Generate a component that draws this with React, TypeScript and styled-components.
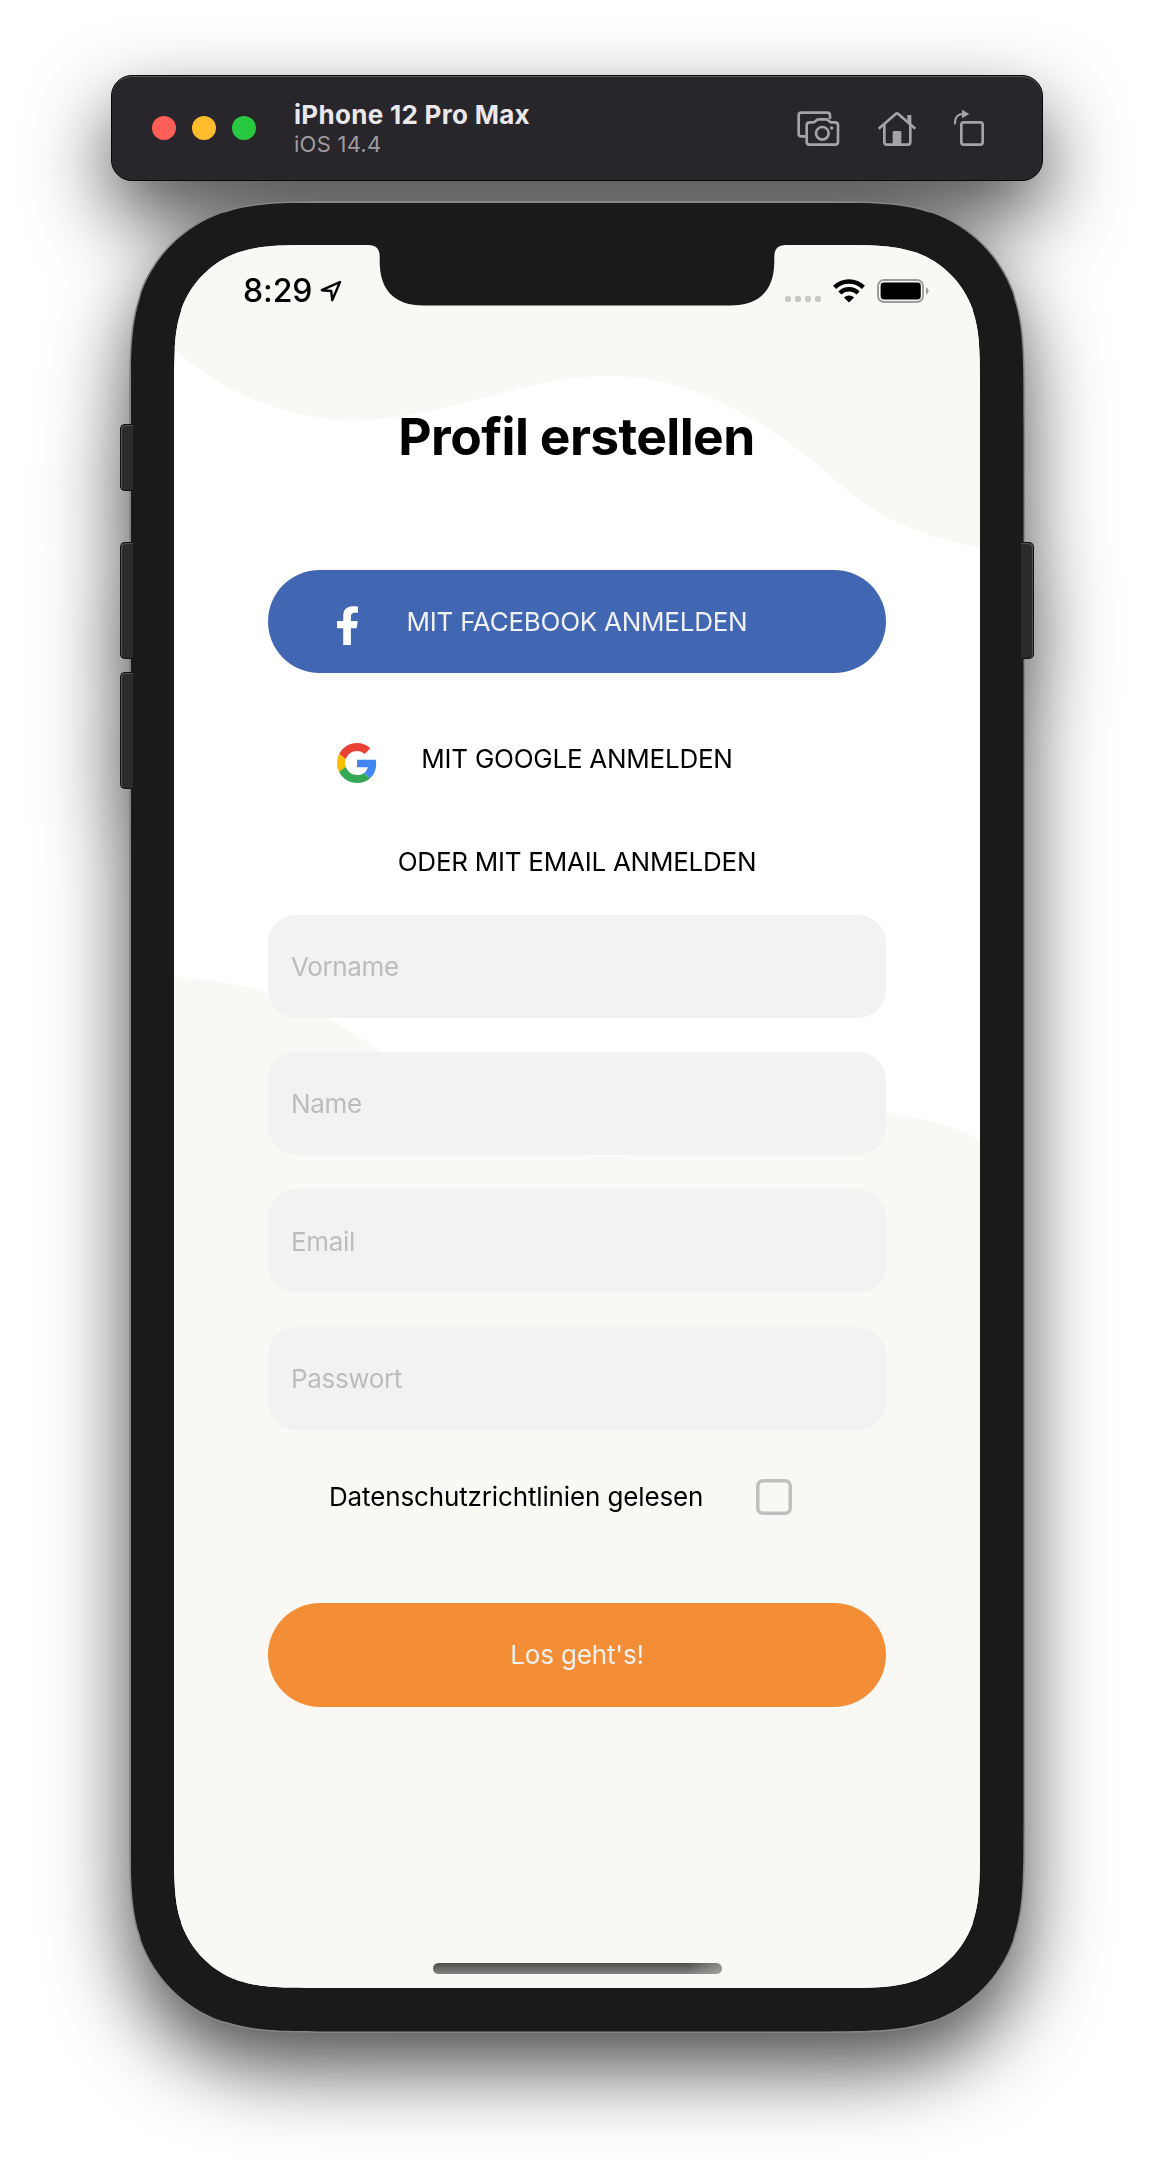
import React from "react";
import styled, { createGlobalStyle } from "styled-components";

const font = `Inter, "Liberation Sans", sans-serif`;

/* Outline of a rectangle with continuous (squircle-like) corners. */
const smoothRect = (w: number, h: number, r: number) => {
  const n = (v: number) => v.toFixed(2);
  const p = (x: number, y: number) => `${n(x)} ${n(y)}`;
  const a = 1.528665 * r;
  const b = 1.088493 * r;
  const c = 0.868407 * r;
  const d = 0.631494 * r;
  const e = 0.074911 * r;
  const f = 0.372824 * r;
  const g = 0.16906 * r;
  const i = 0.669934 * r;
  const j = 0.065496 * r;
  return [
    `M${p(a, 0)} L${p(w - a, 0)}`,
    `C${p(w - b, 0)} ${p(w - c, 0)} ${p(w - i, j)} L${p(w - d, e)}`,
    `C${p(w - f, g)} ${p(w - g, f)} ${p(w - e, d)} L${p(w - j, i)}`,
    `C${p(w, c)} ${p(w, b)} ${p(w, a)}`,
    `L${p(w, h - a)}`,
    `C${p(w, h - b)} ${p(w, h - c)} ${p(w - j, h - i)} L${p(w - e, h - d)}`,
    `C${p(w - g, h - f)} ${p(w - f, h - g)} ${p(w - d, h - e)} L${p(w - i, h - j)}`,
    `C${p(w - c, h)} ${p(w - b, h)} ${p(w - a, h)}`,
    `L${p(a, h)}`,
    `C${p(b, h)} ${p(c, h)} ${p(i, h - j)} L${p(d, h - e)}`,
    `C${p(f, h - g)} ${p(g, h - f)} ${p(e, h - d)} L${p(j, h - i)}`,
    `C${p(0, h - c)} ${p(0, h - b)} ${p(0, h - a)}`,
    `L${p(0, a)}`,
    `C${p(0, b)} ${p(0, c)} ${p(j, i)} L${p(e, d)}`,
    `C${p(g, f)} ${p(f, g)} ${p(d, e)} L${p(i, j)}`,
    `C${p(c, 0)} ${p(b, 0)} ${p(a, 0)} Z`,
  ].join(" ");
};

const GlobalStyle = createGlobalStyle`
  *, *::before, *::after { box-sizing: border-box; }
  body { margin: 0; background: #fff; font-family: ${font}; }
`;

const Page = styled.main`
  height: 2182px;
  padding-top: 75px;
  overflow: hidden;
  background: #fff;
`;

const Simulator = styled.div`
  display: flex;
  flex-direction: column;
  align-items: center;
  gap: 20px;
  filter: drop-shadow(0 35px 40px rgba(0, 0, 0, 0.7));
`;

const Toolbar = styled.header`
  display: flex;
  align-items: center;
  width: 932px;
  height: 106px;
  padding: 0 57px 0 40px;
  border: 1px solid #060606;
  border-radius: 21px;
  background: #28262b;
  box-shadow: inset 0 1px 0 #5c5b5e;
`;

const Lights = styled.div`
  display: flex;
  gap: 16px;
`;

const Light = styled.span<{ $color: string }>`
  width: 24px;
  height: 24px;
  border-radius: 50%;
  background: ${(p) => p.$color};
`;

const DeviceInfo = styled.div`
  flex: 1;
  margin-left: 38px;
  padding-top: 2px;
`;

const DeviceName = styled.div`
  font-size: 26px;
  font-weight: 700;
  line-height: 30px;
  letter-spacing: 0.3px;
  color: #e9e8ea;
`;

const DeviceOs = styled.div`
  font-size: 22px;
  line-height: 29px;
  letter-spacing: 0.25px;
  color: #9d9ba0;
`;

const Actions = styled.div`
  display: flex;
  align-items: center;
  gap: 36px;
  color: #a5a3a8;
`;

const Device = styled.div`
  position: relative;
  width: 896px;
  height: 1832px;
`;

const SideKey = styled.span<{ $side: "left" | "right"; $top: number; $height: number }>`
  position: absolute;
  ${(p) => p.$side}: -9px;
  top: ${(p) => p.$top}px;
  width: 13px;
  height: ${(p) => p.$height}px;
  border: 1px solid #111;
  border-${(p) => (p.$side === "left" ? "right" : "left")}: 0;
  border-radius: ${(p) => (p.$side === "left" ? "5px 0 0 5px" : "0 5px 5px 0")};
  background: #2b2b2b;
  box-shadow: inset ${(p) => (p.$side === "left" ? "1px" : "-1px")} 1px 1px #555;
`;

const Rim = styled.div`
  position: relative;
  padding: 1.5px;
  width: 896px;
  height: 1832px;
  background: #868686;
  clip-path: path("${smoothRect(896, 1832, 145)}");
`;

const Bezel = styled.div`
  width: 893px;
  height: 1829px;
  padding: 42.5px 43.5px;
  background: #1a1a1a;
  clip-path: path("${smoothRect(893, 1829, 143.5)}");
`;

const Screen = styled.section`
  position: relative;
  display: flex;
  flex-direction: column;
  width: 806px;
  height: 1743px;
  padding-bottom: 14.5px;
  background: #fff;
  clip-path: path("${smoothRect(806, 1743, 101)}");
`;

const Waves = styled.svg`
  position: absolute;
  inset: 0;
`;

const Notch = styled.svg`
  position: absolute;
  top: 0;
  left: 190px;
`;

const StatusBar = styled.div`
  position: relative;
  display: flex;
  align-items: center;
  justify-content: space-between;
  height: 91px;
  padding: 0 50px 0 69px;
`;

const StatusGroup = styled.div<{ $gap: number }>`
  display: flex;
  align-items: center;
  gap: ${(p) => p.$gap}px;
`;

const Clock = styled.span`
  font-size: 32px;
  font-weight: 550;
  line-height: 40px;
  letter-spacing: -0.1px;
  color: #000;
`;

const Dots = styled.span`
  display: flex;
  gap: 4px;
  padding-top: 16px;
`;

const Dot = styled.i`
  width: 6px;
  height: 6px;
  border-radius: 2px;
  background: #c8c7c5;
`;

const Form = styled.form`
  position: relative;
  display: flex;
  flex-direction: column;
  width: 618px;
  margin: 0 auto;
`;

const Title = styled.h1`
  margin: 69px 0 103px;
  padding-right: 1px;
  font-size: 51.5px;
  font-weight: 700;
  line-height: 62px;
  letter-spacing: -0.6px;
  text-align: center;
  white-space: nowrap;
  color: #000;
`;

const ProviderButton = styled.button<{ $bg: string; $color: string }>`
  display: grid;
  grid-template-columns: 1fr auto 1fr;
  align-items: center;
  height: 103.4px;
  margin: 0 0 33.6px;
  padding: 0;
  border: 0;
  border-radius: 52px;
  background: ${(p) => p.$bg};
  color: ${(p) => p.$color};
  font: 400 26px ${font};

  &:nth-of-type(2) {
    margin-bottom: 0;
  }
`;

const ProviderIcon = styled.span`
  display: flex;
  padding: 8px 0 0 68.5px;
`;

const Caption = styled.span<{ $spacing: number }>`
  letter-spacing: ${(p) => p.$spacing}px;
  white-space: nowrap;
`;

const Divider = styled.p`
  margin: 0;
  font-size: 26px;
  line-height: 104.2px;
  text-align: center;
  color: #000;
`;

const Fields = styled.div`
  display: flex;
  flex-direction: column;
  gap: 34px;
`;

const Field = styled.input`
  width: 100%;
  height: 103.4px;
  padding: 0 23px;
  border: 0;
  border-radius: 28px;
  outline: 0;
  background: #f2f2f2;
  font: 400 26px ${font};
  letter-spacing: -0.35px;

  &::placeholder {
    color: #bcbcbc;
    opacity: 1;
  }
`;

const Consent = styled.label`
  display: flex;
  align-items: center;
  justify-content: space-between;
  height: 36px;
  margin: 48.5px 94px 88.5px 61px;
  font-size: 26px;
  color: #000;
`;

const Checkbox = styled.span`
  width: 36px;
  height: 36px;
  border-radius: 7px;
  box-shadow: inset 0 0 0 3.5px #bfbfbf;
`;

const Submit = styled.button`
  height: 103.5px;
  padding: 0;
  border: 0;
  border-radius: 52px;
  background: #f48e36;
  color: #f1f1f1;
  font: 400 26px ${font};
`;

const HomeIndicator = styled.div`
  position: relative;
  width: 289px;
  height: 10.5px;
  margin: auto auto 0;
  border-radius: 5.5px;
  background: linear-gradient(90deg, transparent 88%, rgba(190, 188, 185, 0.55)),
    linear-gradient(#4e4d4b, #858382);
`;

const ScreenshotIcon = () => (
  <svg width="45" height="38" viewBox="80 54 135 114" fill="none" stroke="currentColor" strokeWidth="8">
    <path d="M109 136H96Q88 136 88 128V73Q88 65 96 65H174Q182 65 182 73V84" />
    <path d="M122 94H131Q136 94 139 90L141 88Q144 85 149 85H169Q174 85 177 88L179 90Q182 94 187 94H197Q206 94 206 103V152Q206 161 197 161H121Q112 161 112 152V103Q112 94 122 94Z" />
    <circle cx="159" cy="127" r="19" />
    <circle cx="187" cy="111" r="5" fill="currentColor" stroke="none" />
  </svg>
);

const HomeIcon = () => (
  <svg width="40" height="38" viewBox="321 54 120 114" fill="none" stroke="currentColor" strokeWidth="8">
    <path d="M326 113L377 69Q381 65 385 69L436 113" />
    <path d="M343 100V152Q343 161 351 161H413Q421 161 421 152V100" />
    <path d="M412 92V72H424V102ZM368 160V124Q368 120 372 120H390Q394 120 394 124V160Z" fill="currentColor" stroke="none" />
  </svg>
);

const RotateIcon = () => (
  <svg width="32" height="38" viewBox="546 54 96 114" fill="none" stroke="currentColor" strokeWidth="8">
    <rect x="571" y="94" width="64" height="67" rx="7" />
    <path d="M552 100C551 80 559 69 577 69" strokeWidth="6" />
    <path d="M573 56L595 69L573 82Z" fill="currentColor" stroke="none" />
  </svg>
);

const LocationIcon = () => (
  <svg width="22" height="22" viewBox="0 0 22 22" fill="none" stroke="#000" strokeWidth="2.4" strokeLinejoin="round">
    <path d="M1.8 10.2L20 2L12.2 20.2L11.2 11Z" />
  </svg>
);

const WifiIcon = () => (
  <svg width="32" height="24" viewBox="0 0 32 24" fill="none" stroke="#000" strokeWidth="4.4">
    <path d="M1.6 8.4A20.4 20.4 0 0 1 30.4 8.4" />
    <path d="M6.9 14A12.9 12.9 0 0 1 25.1 14" />
    <path d="M16 23.6L10.9 18.6A7.3 7.3 0 0 1 21.1 18.6Z" fill="#000" stroke="none" />
  </svg>
);

const BatteryIcon = () => (
  <svg width="53" height="24" viewBox="0 0 53 24">
    <rect x="1" y="1" width="45" height="22" rx="6" fill="none" stroke="#9c9b99" strokeWidth="1.9" />
    <rect x="3.6" y="3.5" width="40.2" height="17" rx="3.4" fill="#000" />
    <path d="M49 8.2Q51.6 9.4 51.6 12T49 15.8Z" fill="#9c9b99" />
  </svg>
);

const FacebookIcon = () => (
  <svg width="21" height="39.5" viewBox="22.9 0 274.2 512" fill="#fff">
    <path d="M279.14 288l14.22-92.66h-88.91v-60.13c0-25.35 12.42-50.06 52.24-50.06h40.42V6.26S260.43 0 225.36 0c-73.22 0-121.08 44.38-121.08 124.72v70.62H22.89V288h81.39v224h100.17V288z" />
  </svg>
);

const GoogleIcon = () => (
  <svg width="40" height="40" viewBox="0 0 48 48">
    <path fill="#EA4335" d="M24 9.5c3.54 0 6.71 1.22 9.21 3.6l6.85-6.85C35.9 2.38 30.47 0 24 0 14.62 0 6.51 5.38 2.56 13.22l7.98 6.19C12.43 13.72 17.74 9.5 24 9.5z" />
    <path fill="#4285F4" d="M46.98 24.55c0-1.57-.15-3.09-.38-4.55H24v9.02h12.94c-.58 2.96-2.26 5.48-4.78 7.18l7.73 6c4.51-4.18 7.09-10.36 7.09-17.65z" />
    <path fill="#FBBC05" d="M10.53 28.59c-.48-1.45-.76-2.99-.76-4.59s.27-3.14.76-4.59l-7.98-6.19C.92 16.46 0 20.12 0 24c0 3.88.92 7.54 2.56 10.78l7.97-6.19z" />
    <path fill="#34A853" d="M24 48c6.48 0 11.93-2.13 15.89-5.81l-7.73-6c-2.15 1.45-4.92 2.3-8.16 2.3-6.26 0-11.57-4.22-13.47-9.91l-7.98 6.19C6.51 42.62 14.62 48 24 48z" />
  </svg>
);

const lights = ["#ff5f57", "#febc2e", "#28c840"];
const fields = [
  { name: "Vorname", type: "text" },
  { name: "Name", type: "text" },
  { name: "Email", type: "email" },
  { name: "Passwort", type: "password" },
];

export default function App() {
  return (
    <>
      <GlobalStyle />
      <Page>
        <Simulator>
          <Toolbar>
            <Lights>
              {lights.map((color) => (
                <Light key={color} $color={color} />
              ))}
            </Lights>
            <DeviceInfo>
              <DeviceName>iPhone 12 Pro Max</DeviceName>
              <DeviceOs>iOS 14.4</DeviceOs>
            </DeviceInfo>
            <Actions>
              <ScreenshotIcon />
              <HomeIcon />
              <RotateIcon />
            </Actions>
          </Toolbar>

          <Device>
            <Rim>
              <Bezel>
                <Screen>
                  <Waves width="806" height="1743" viewBox="174 245 806 1743" fill="#f9f8f5">
                    <path d="M174 245V348C230 401 300 420 355 420C440 420 520 376 610 376C710 376 790 440 852 494C890 524 935 540 980 548V245Z" />
                    <path d="M174 978C250 978 325 1010 380 1051C450 1105 520 1156.500 607 1156.500C700 1156.500 770 1113 870 1113C910 1113 950 1124 980 1140V1988H174Z" />
                  </Waves>
                  <Notch width="426" height="61" viewBox="364 245 426 61">
                    <path
                      fill="#1a1a1a"
                      d="M364 245H368Q379.500 245 379.700 256V262C380 290 394 305.500 424 305.500H730C760 305.500 774 290 774.300 262V256Q774.500 245 786 245H790Z"
                    />
                  </Notch>

                  <StatusBar>
                    <StatusGroup $gap={8}>
                      <Clock>8:29</Clock>
                      <LocationIcon />
                    </StatusGroup>
                    <StatusGroup $gap={12}>
                      <Dots>
                        <Dot />
                        <Dot />
                        <Dot />
                        <Dot />
                      </Dots>
                      <WifiIcon />
                      <BatteryIcon />
                    </StatusGroup>
                  </StatusBar>

                  <Form>
                    <Title>Profil erstellen</Title>
                    <ProviderButton type="button" $bg="#4267b2" $color="#f1f1f1">
                      <ProviderIcon>
                        <FacebookIcon />
                      </ProviderIcon>
                      <Caption $spacing={-0.25}>MIT FACEBOOK ANMELDEN</Caption>
                    </ProviderButton>
                    <ProviderButton type="button" $bg="#fff" $color="#000">
                      <ProviderIcon>
                        <GoogleIcon />
                      </ProviderIcon>
                      <Caption $spacing={-0.25}>MIT GOOGLE ANMELDEN</Caption>
                    </ProviderButton>
                    <Divider>
                      <Caption $spacing={-0.25}>ODER MIT EMAIL ANMELDEN</Caption>
                    </Divider>
                    <Fields>
                      {fields.map((field) => (
                        <Field key={field.name} type={field.type} placeholder={field.name} />
                      ))}
                    </Fields>
                    <Consent>
                      <Caption $spacing={-0.14}>Datenschutzrichtlinien gelesen</Caption>
                      <Checkbox />
                    </Consent>
                    <Submit type="button">
                      <Caption $spacing={-0.15}>Los geht's!</Caption>
                    </Submit>
                  </Form>

                  <HomeIndicator />
                </Screen>
              </Bezel>
            </Rim>
            <SideKey $side="left" $top={223} $height={67} />
            <SideKey $side="left" $top={341} $height={117} />
            <SideKey $side="left" $top={471} $height={117} />
            <SideKey $side="right" $top={341} $height={117} />
          </Device>
        </Simulator>
      </Page>
    </>
  );
}
